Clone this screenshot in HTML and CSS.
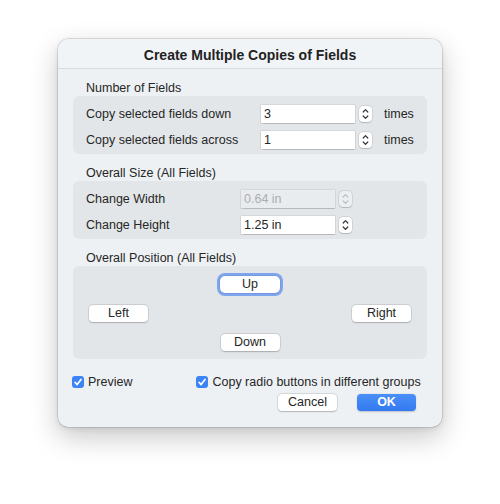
FILE: index.html
```html
<!DOCTYPE html>
<html>
<head>
<meta charset="utf-8">
<link rel="stylesheet" href="styles.css">
</head>
<body>
<div class="dialog">
  <div class="titlebar">Create Multiple Copies of Fields</div>
  <div class="content">
    <div class="group-label">Number of Fields</div>
    <div class="box box-num">
      <div class="row">
        <span class="lbl">Copy selected fields down</span>
        <span class="field">3</span>
        <span class="stepper"><svg width="13" height="16" viewBox="0 0 13 16"><path d="M4.2 6 L6.5 3.7 L8.8 6" fill="none" stroke="#333" stroke-width="1.2" stroke-linecap="round" stroke-linejoin="round"/><path d="M4.2 10 L6.5 12.3 L8.8 10" fill="none" stroke="#333" stroke-width="1.2" stroke-linecap="round" stroke-linejoin="round"/></svg></span>
        <span class="unit">times</span>
      </div>
      <div class="row">
        <span class="lbl">Copy selected fields across</span>
        <span class="field">1</span>
        <span class="stepper"><svg width="13" height="16" viewBox="0 0 13 16"><path d="M4.2 6 L6.5 3.7 L8.8 6" fill="none" stroke="#333" stroke-width="1.2" stroke-linecap="round" stroke-linejoin="round"/><path d="M4.2 10 L6.5 12.3 L8.8 10" fill="none" stroke="#333" stroke-width="1.2" stroke-linecap="round" stroke-linejoin="round"/></svg></span>
        <span class="unit">times</span>
      </div>
    </div>

    <div class="group-label">Overall Size (All Fields)</div>
    <div class="box box-size">
      <div class="row">
        <span class="lbl">Change Width</span>
        <span class="field disabled">0.64 in</span>
        <span class="stepper disabled"><svg width="13" height="16" viewBox="0 0 13 16"><path d="M4.2 6 L6.5 3.7 L8.8 6" fill="none" stroke="#b8bcc0" stroke-width="1.2" stroke-linecap="round" stroke-linejoin="round"/><path d="M4.2 10 L6.5 12.3 L8.8 10" fill="none" stroke="#b8bcc0" stroke-width="1.2" stroke-linecap="round" stroke-linejoin="round"/></svg></span>
      </div>
      <div class="row">
        <span class="lbl">Change Height</span>
        <span class="field">1.25 in</span>
        <span class="stepper"><svg width="13" height="16" viewBox="0 0 13 16"><path d="M4.2 6 L6.5 3.7 L8.8 6" fill="none" stroke="#333" stroke-width="1.2" stroke-linecap="round" stroke-linejoin="round"/><path d="M4.2 10 L6.5 12.3 L8.8 10" fill="none" stroke="#333" stroke-width="1.2" stroke-linecap="round" stroke-linejoin="round"/></svg></span>
      </div>
    </div>

    <div class="group-label">Overall Position (All Fields)</div>
    <div class="box box-pos">
      <div class="pos-row center"><button class="btn focused">Up</button></div>
      <div class="pos-row spread"><button class="btn">Left</button><button class="btn">Right</button></div>
      <div class="pos-row center"><button class="btn">Down</button></div>
    </div>

    <div class="checks">
      <label class="check"><span class="cb"><svg width="12" height="12" viewBox="0 0 12 12"><path d="M3 6.3 L5.1 8.6 L9 3.4" fill="none" stroke="#fff" stroke-width="1.7" stroke-linecap="round" stroke-linejoin="round"/></svg></span>Preview</label>
      <label class="check"><span class="cb"><svg width="12" height="12" viewBox="0 0 12 12"><path d="M3 6.3 L5.1 8.6 L9 3.4" fill="none" stroke="#fff" stroke-width="1.7" stroke-linecap="round" stroke-linejoin="round"/></svg></span>Copy radio buttons in different groups</label>
    </div>

    <div class="actions">
      <button class="btn">Cancel</button>
      <button class="btn primary">OK</button>
    </div>
  </div>
</div>
</body>
</html>
```

FILE: styles.css
```css
html, body {
  margin: 0;
  padding: 0;
  background: #ffffff;
}
body {
  width: 500px;
  height: 504px;
  overflow: hidden;
  font-family: "Liberation Sans", Arial, sans-serif;
  font-size: 12.5px;
  color: #262626;
}
.dialog {
  margin: 39px 0 0 58px;
  width: 384px;
  height: 388px;
  box-sizing: border-box;
  background: #eef1f4;
  border-radius: 10px;
  box-shadow: 0 0 0 0.5px rgba(0,0,0,0.22), 0 10px 28px rgba(0,0,0,0.22), 0 2px 6px rgba(0,0,0,0.08);
  overflow: hidden;
}
.titlebar {
  height: 30px;
  box-sizing: border-box;
  padding-top: 3px;
  border-bottom: 1px solid #d9dde1;
  background: #f1f4f7;
  text-align: center;
  font-weight: bold;
  font-size: 14px;
  line-height: 26px;
  color: #222;
}
.content {
  padding: 12px 15px 0 15px;
}
.group-label {
  height: 15px;
  line-height: 15px;
  padding-left: 13px;
}
.box {
  background: #e3e6e9;
  border-radius: 6px;
  margin-bottom: 12px;
}
.box-num, .box-size {
  padding: 9px 0 5px 13px;
  display: flex;
  flex-direction: column;
  gap: 8px;
}
.row {
  display: flex;
  align-items: center;
  height: 18px;
}
.box-num .lbl { width: 175px; }
.box-size .lbl { width: 155px; }
.field {
  width: 94px;
  height: 18px;
  box-sizing: border-box;
  background: #ffffff;
  padding-left: 3px;
  line-height: 18px;
  box-shadow: 0 0 0 0.5px rgba(0,0,0,0.12), 0 0.5px 1px rgba(0,0,0,0.15);
}
.field.disabled {
  background: #e9ecee;
  color: #a9adb1;
}
.stepper {
  margin-left: 4px;
  width: 13px;
  height: 16px;
  background: #ffffff;
  border-radius: 4px;
  box-shadow: 0 0 0 0.5px rgba(0,0,0,0.14), 0 0.5px 1px rgba(0,0,0,0.15);
  display: flex;
}
.stepper.disabled {
  background: #eceff1;
}
.unit {
  margin-left: 12px;
}
.box-pos {
  height: 93px;
  box-sizing: border-box;
  padding: 10px 16px 0 16px;
  display: flex;
  flex-direction: column;
  gap: 12px;
}
.pos-row {
  display: flex;
  height: 17px;
}
.pos-row.center { justify-content: center; }
.pos-row.spread { justify-content: space-between; }
.btn {
  width: 59px;
  height: 17px;
  padding: 0;
  border: none;
  border-radius: 4px;
  background: #ffffff;
  font-family: "Liberation Sans", Arial, sans-serif;
  font-size: 12.5px;
  color: #262626;
  box-shadow: 0 0 0 0.5px rgba(0,0,0,0.14), 0 0.5px 1.5px rgba(0,0,0,0.2);
  line-height: 17px;
}
.btn.focused {
  width: 60px;
  box-shadow: 0 0 0 0.5px rgba(0,0,0,0.14), 0 0 0 3px #7ea5ee;
  border-radius: 5px;
}
.checks {
  display: flex;
  align-items: center;
  height: 14px;
  margin-top: 16px;
}
.check {
  display: flex;
  align-items: center;
  gap: 4px;
  margin-left: -1px;
}
.check + .check {
  margin-left: 64px;
}
.cb {
  width: 12px;
  height: 12px;
  border-radius: 3px;
  background: #3a84f5;
  display: flex;
}
.actions {
  display: flex;
  justify-content: flex-end;
  gap: 20px;
  margin-top: 5px;
  padding-right: 11px;
}
.btn.primary {
  background: linear-gradient(#4a90f8, #3479f0);
  color: #ffffff;
  font-weight: bold;
  box-shadow: 0 0.5px 1.5px rgba(0,0,0,0.2);
}
```
